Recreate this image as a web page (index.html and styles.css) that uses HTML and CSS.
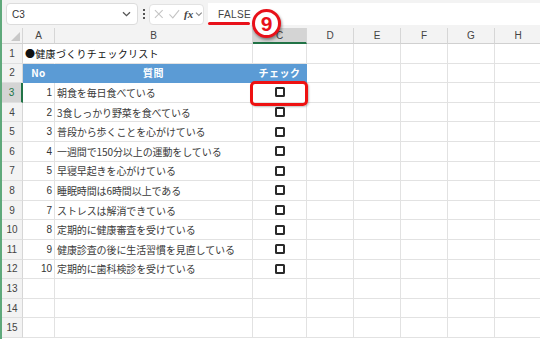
FILE: index.html
```html
<!DOCTYPE html>
<html lang="ja">
<head>
<meta charset="utf-8">
<title>健康づくりチェックリスト</title>
<link rel="stylesheet" href="styles.css">
</head>
<body>
<div class="app">
  <div class="toolbar">
    <div class="namebox">
      <span class="ref">C3</span>
      <svg class="chev" width="9" height="6" viewBox="0 0 9 6"><path d="M1 1.2 L4.5 4.6 L8 1.2" fill="none" stroke="#555" stroke-width="1.3"/></svg>
    </div>
    <span class="dots"><i></i><i></i><i></i></span>
    <div class="fxbox">
      <svg width="12" height="12" viewBox="0 0 12 12"><path d="M2 2 L10 10 M10 2 L2 10" stroke="#c4c4c4" stroke-width="1.1" fill="none"/></svg>
      <svg width="13" height="12" viewBox="0 0 13 12"><path d="M1.5 6.5 L5 10 L11.5 2" stroke="#c4c4c4" stroke-width="1.1" fill="none"/></svg>
      <span class="fx">fx</span>
      <svg class="chev2" width="8" height="6" viewBox="0 0 8 6"><path d="M1 1.5 L4 4.5 L7 1.5" fill="none" stroke="#888" stroke-width="1.1"/></svg>
    </div>
    <div class="formula">
      <span class="val">FALSE</span>
      <span class="uline"></span>
      <span class="badge">9</span>
    </div>
  </div>

  <div class="sheet">
    <div class="row colhead">
      <div class="rh corner"><span class="tri"></span></div>
      <div class="ch ca">A</div><div class="ch cb">B</div><div class="ch cc sel">C</div>
      <div class="ch cd">D</div><div class="ch cd">E</div><div class="ch cd">F</div><div class="ch cd">G</div><div class="ch cd">H</div>
    </div>

    <div class="row">
      <div class="rh">1</div>
      <div class="c ca title">●健康づくりチェックリスト</div><div class="c cb nobr"></div><div class="c cc"></div>
      <div class="c cd"></div><div class="c cd"></div><div class="c cd"></div><div class="c cd"></div><div class="c cd"></div>
    </div>

    <div class="row">
      <div class="rh">2</div>
      <div class="c ca hd">No</div><div class="c cb hd">質問</div><div class="c cc hd">チェック</div>
      <div class="c cd"></div><div class="c cd"></div><div class="c cd"></div><div class="c cd"></div><div class="c cd"></div>
    </div>

    <div class="row">
      <div class="rh rsel">3</div>
      <div class="c ca num">1</div><div class="c cb q">朝食を毎日食べている</div><div class="c cc chk"><span class="box"></span><span class="redframe"></span></div>
      <div class="c cd"></div><div class="c cd"></div><div class="c cd"></div><div class="c cd"></div><div class="c cd"></div>
    </div>

    <div class="row">
      <div class="rh">4</div>
      <div class="c ca num">2</div><div class="c cb q">3食しっかり野菜を食べている</div><div class="c cc chk"><span class="box"></span></div>
      <div class="c cd"></div><div class="c cd"></div><div class="c cd"></div><div class="c cd"></div><div class="c cd"></div>
    </div>

    <div class="row">
      <div class="rh">5</div>
      <div class="c ca num">3</div><div class="c cb q">普段から歩くことを心がけている</div><div class="c cc chk"><span class="box"></span></div>
      <div class="c cd"></div><div class="c cd"></div><div class="c cd"></div><div class="c cd"></div><div class="c cd"></div>
    </div>

    <div class="row">
      <div class="rh">6</div>
      <div class="c ca num">4</div><div class="c cb q">一週間で150分以上の運動をしている</div><div class="c cc chk"><span class="box"></span></div>
      <div class="c cd"></div><div class="c cd"></div><div class="c cd"></div><div class="c cd"></div><div class="c cd"></div>
    </div>

    <div class="row">
      <div class="rh">7</div>
      <div class="c ca num">5</div><div class="c cb q">早寝早起きを心がけている</div><div class="c cc chk"><span class="box"></span></div>
      <div class="c cd"></div><div class="c cd"></div><div class="c cd"></div><div class="c cd"></div><div class="c cd"></div>
    </div>

    <div class="row">
      <div class="rh">8</div>
      <div class="c ca num">6</div><div class="c cb q">睡眠時間は6時間以上である</div><div class="c cc chk"><span class="box"></span></div>
      <div class="c cd"></div><div class="c cd"></div><div class="c cd"></div><div class="c cd"></div><div class="c cd"></div>
    </div>

    <div class="row">
      <div class="rh">9</div>
      <div class="c ca num">7</div><div class="c cb q">ストレスは解消できている</div><div class="c cc chk"><span class="box"></span></div>
      <div class="c cd"></div><div class="c cd"></div><div class="c cd"></div><div class="c cd"></div><div class="c cd"></div>
    </div>

    <div class="row">
      <div class="rh">10</div>
      <div class="c ca num">8</div><div class="c cb q">定期的に健康審査を受けている</div><div class="c cc chk"><span class="box"></span></div>
      <div class="c cd"></div><div class="c cd"></div><div class="c cd"></div><div class="c cd"></div><div class="c cd"></div>
    </div>

    <div class="row">
      <div class="rh">11</div>
      <div class="c ca num">9</div><div class="c cb q">健康診査の後に生活習慣を見直している</div><div class="c cc chk"><span class="box"></span></div>
      <div class="c cd"></div><div class="c cd"></div><div class="c cd"></div><div class="c cd"></div><div class="c cd"></div>
    </div>

    <div class="row">
      <div class="rh">12</div>
      <div class="c ca num">10</div><div class="c cb q">定期的に歯科検診を受けている</div><div class="c cc chk"><span class="box"></span></div>
      <div class="c cd"></div><div class="c cd"></div><div class="c cd"></div><div class="c cd"></div><div class="c cd"></div>
    </div>

    <div class="row">
      <div class="rh">13</div>
      <div class="c ca"></div><div class="c cb"></div><div class="c cc"></div>
      <div class="c cd"></div><div class="c cd"></div><div class="c cd"></div><div class="c cd"></div><div class="c cd"></div>
    </div>

    <div class="row">
      <div class="rh">14</div>
      <div class="c ca"></div><div class="c cb"></div><div class="c cc"></div>
      <div class="c cd"></div><div class="c cd"></div><div class="c cd"></div><div class="c cd"></div><div class="c cd"></div>
    </div>

    <div class="row">
      <div class="rh">15</div>
      <div class="c ca"></div><div class="c cb"></div><div class="c cc"></div>
      <div class="c cd"></div><div class="c cd"></div><div class="c cd"></div><div class="c cd"></div><div class="c cd"></div>
    </div>
  </div>
</div>
</body>
</html>
```

FILE: styles.css
```css
* { box-sizing: border-box; }
html, body { margin: 0; padding: 0; }
body {
  width: 540px;
  height: 339px;
  overflow: hidden;
  background: #ffffff;
  font-family: "Noto Sans CJK JP", "Noto Sans", sans-serif;
  color: #333;
}
.app {
  width: 540px;
  height: 339px;
  border-left: 2px solid #5fa97b;
  overflow: hidden;
}

/* toolbar */
.toolbar {
  height: 28px;
  background: #f3f3f3;
  display: flex;
  align-items: center;
  padding-left: 4px;
  position: relative;
  z-index: 4;
}
.namebox {
  width: 132px;
  height: 22px;
  background: #fff;
  border: 1px solid #dcdcdc;
  border-radius: 4px;
  display: flex;
  align-items: center;
  justify-content: space-between;
  padding: 0 6px 0 5px;
}
.ref {
  font-family: "Liberation Sans", Arial, sans-serif;
  font-size: 10px;
  color: #333;
}
.dots {
  width: 11px;
  display: flex;
  flex-direction: column;
  align-items: center;
  gap: 2px;
}
.dots i {
  display: block;
  width: 2px;
  height: 2px;
  background: #555;
}
.fxbox {
  width: 55px;
  height: 21px;
  background: #fff;
  border: 1px solid #e2e2e2;
  border-radius: 4px;
  display: flex;
  align-items: center;
  gap: 3px;
  padding-left: 3px;
}
.fx {
  font-family: "Liberation Serif", "Times New Roman", serif;
  font-style: italic;
  font-weight: bold;
  font-size: 11px;
  color: #444;
  margin-left: 1px;
}
.chev2 { margin-left: -1px; }
.formula {
  flex: 1;
  height: 22px;
  margin-left: 4px;
  background: #fff;
  position: relative;
  display: flex;
  align-items: center;
  padding-left: 10px;
}
.val {
  font-family: "Liberation Sans", Arial, sans-serif;
  font-size: 10px;
  color: #444;
  letter-spacing: 0.4px;
}
.uline {
  position: absolute;
  left: 0;
  top: 19px;
  width: 42px;
  height: 3px;
  background: #e8111a;
  border-radius: 2px;
}
.badge {
  position: absolute;
  left: 44px;
  top: 6px;
  width: 29px;
  height: 29px;
  border-radius: 50%;
  background: #fff;
  border: 3px solid #e8111a;
  box-shadow: 1px 2px 3px rgba(0,0,0,0.4);
  display: flex;
  align-items: center;
  justify-content: center;
  font-family: "Liberation Sans", Arial, sans-serif;
  font-weight: bold;
  font-size: 21px;
  line-height: 1;
  color: #e8111a;
  z-index: 5;
}

/* sheet */
.sheet { display: flex; flex-direction: column; }
.row {
  display: flex;
  height: 19.6px;
  flex: none;
}
.row.colhead {
  height: 16px;
  background: #f3f3f3;
}
.rh {
  width: 21px;
  flex: none;
  background: #f3f3f3;
  border-right: 1px solid #d6d6d6;
  border-bottom: 1px solid #e0e0e0;
  display: flex;
  align-items: center;
  justify-content: center;
  font-family: "Liberation Sans", Arial, sans-serif;
  font-size: 10px;
  color: #444;
}
.rh.rsel {
  background: #d4d4d4;
  color: #217346;
  border-right: 2px solid #217346;
}
.corner { position: relative; border-bottom: 1px solid #d0d0d0; }
.tri {
  position: absolute;
  right: 2px;
  bottom: 2px;
  width: 0;
  height: 0;
  border-left: 9px solid transparent;
  border-bottom: 9px solid #c8c8c8;
}
.ca { width: 32px; flex: none; }
.cb { width: 198px; flex: none; }
.cc { width: 54px; flex: none; }
.cd { width: 47px; flex: none; }

.ch {
  border-right: 1px solid #d6d6d6;
  border-bottom: 1px solid #d0d0d0;
  display: flex;
  align-items: center;
  justify-content: center;
  font-family: "Liberation Sans", Arial, sans-serif;
  font-size: 10px;
  color: #444;
}
.ch.sel {
  background: #d4d4d4;
  border-bottom: 2px solid #217346;
}

.c {
  border-right: 1px solid #e2e2e2;
  border-bottom: 1px solid #e2e2e2;
  display: flex;
  align-items: center;
  font-size: 10px;
  white-space: nowrap;
  position: relative;
}
.title {
  overflow: visible;
  color: #111;
  padding-left: 2px;
  letter-spacing: 0.3px;
  border-right-color: transparent;
  z-index: 1;
}
.hd {
  background: #5b9bd5;
  border-right-color: #5b9bd5;
  border-bottom-color: #5b9bd5;
  color: #fff;
  font-weight: bold;
  justify-content: center;
  letter-spacing: 0.5px;
}
.num {
  justify-content: flex-end;
  padding-right: 2px;
  font-family: "Liberation Sans", Arial, sans-serif;
  color: #333;
}
.q {
  padding-left: 2px;
  color: #3a3a3a;
  letter-spacing: -0.1px;
  overflow: visible;
}
.chk { justify-content: center; }
.box {
  display: block;
  width: 10px;
  height: 10px;
  border: 2px solid #2a2a2a;
  border-radius: 1.5px;
  margin-left: 1px;
}
.redframe {
  position: absolute;
  left: -3px;
  top: -2px;
  width: 58px;
  height: 25px;
  border: 3.5px solid #ee1111;
  border-radius: 5px;
  box-shadow: 1px 1px 2px rgba(0,0,0,0.25);
  z-index: 3;
}
```
